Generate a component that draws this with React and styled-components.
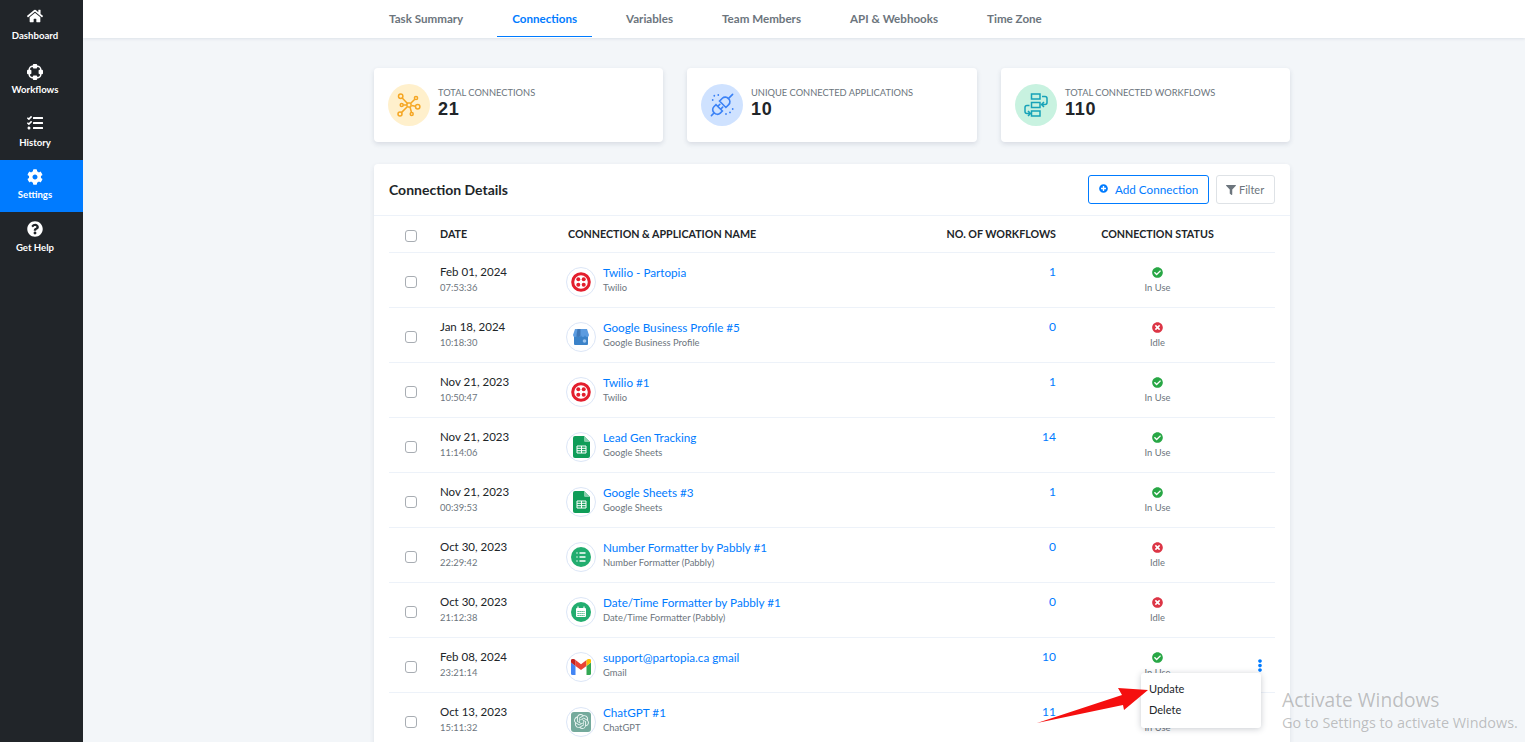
import React from "react";
import styled, { createGlobalStyle } from "styled-components";
import {
  FaHome,
  FaTasks,
  FaCog,
  FaQuestionCircle,
  FaCheckCircle,
  FaTimesCircle,
  FaPlusCircle,
  FaFilter,
  FaEllipsisV,
} from "react-icons/fa";
import { SiOpenai } from "react-icons/si";

const GlobalStyle = createGlobalStyle`
  html, body {
    margin: 0;
    height: 100%;
    overflow: hidden;
    background: #f3f6f9;
    font-family: "Lato", "Open Sans", sans-serif;
  }
  * { box-sizing: border-box; }
`;

const Page = styled.div`
  display: flex;
  height: 742px;
  overflow: hidden;
  position: relative;
`;

const Sidebar = styled.aside`
  width: 83px;
  flex: none;
  background: #212529;
  display: flex;
  flex-direction: column;
`;

const SideItem = styled.div`
  height: ${(p) => p.$h || 52}px;
  padding: ${(p) => p.$top || 9}px 13px 0 0;
  display: flex;
  flex-direction: column;
  align-items: center;
  gap: ${(p) => p.$gap || 4}px;
  color: #fff;
  font-size: 9.6px;
  line-height: 12px;
  font-weight: 700;
  background: ${(p) => (p.$active ? "#007bff" : "transparent")};
  svg {
    width: 16px;
    height: 16px;
  }
`;

const Main = styled.main`
  flex: 1;
  min-width: 0;
`;

const TopBar = styled.nav`
  height: 38px;
  background: #fff;
  box-shadow: 0 1px 3px rgba(30, 50, 80, 0.1);
  padding-left: 291px;
  display: flex;
  align-items: flex-start;
  gap: 19px;
`;

const Tab = styled.div`
  height: 37px;
  padding: 0 15px;
  display: flex;
  align-items: center;
  font-size: 11.6px;
  font-weight: 700;
  color: ${(p) => (p.$active ? "#007bff" : "#6c757d")};
  border-bottom: 1px solid ${(p) => (p.$active ? "#007bff" : "transparent")};
`;

const Content = styled.div`
  width: 916px;
  margin-left: 291px;
  padding-top: 30px;
`;

const Cards = styled.div`
  display: grid;
  grid-template-columns: 289px 290px 289px;
  gap: 24px;
`;

const Card = styled.div`
  height: 74px;
  background: #fff;
  border-radius: 4px;
  box-shadow: 0 2px 5px rgba(40, 60, 90, 0.14);
  padding: 0 14px;
  display: flex;
  align-items: center;
  gap: 8px;
`;

const CardIcon = styled.div`
  width: 42px;
  height: 42px;
  border-radius: 50%;
  background: ${(p) => p.$bg};
  display: flex;
  align-items: center;
  justify-content: center;
  flex: none;
`;

const CardText = styled.div`
  margin-top: -5px;
`;

const CardLabel = styled.div`
  font-size: 9.3px;
  line-height: 13px;
  color: #6c757d;
`;

const CardValue = styled.div`
  font-family: "Liberation Sans", sans-serif;
  font-weight: 700;
  font-size: 18px;
  line-height: 20px;
  color: #212529;
  letter-spacing: 0.7px;
`;

const Panel = styled.section`
  margin-top: 22px;
  background: #fff;
  border-radius: 4px 4px 0 0;
  box-shadow: 0 2px 5px rgba(40, 60, 90, 0.1);
`;

const PanelHead = styled.header`
  height: 52px;
  padding: 0 15px;
  border-bottom: 1px solid #edf2f9;
  display: flex;
  align-items: center;
  gap: 7px;
`;

const PanelTitle = styled.h2`
  margin: 0 auto 0 0;
  font-size: 14px;
  font-weight: 700;
  color: #212529;
`;

const Button = styled.button`
  width: ${(p) => (p.$primary ? 121 : 59)}px;
  height: 29px;
  padding: 0 0 ${(p) => (p.$primary ? 2 : 0)}px ${(p) => (p.$primary ? 10 : 9)}px;
  background: #fff;
  border-radius: 3px;
  border: 1px solid ${(p) => (p.$primary ? "#007bff" : "#dee2e6")};
  color: ${(p) => (p.$primary ? "#007bff" : "#6c757d")};
  font: inherit;
  font-size: ${(p) => (p.$primary ? 11.7 : 11)}px;
  display: flex;
  align-items: center;
  gap: ${(p) => (p.$primary ? 7 : 3)}px;
  svg {
    width: ${(p) => (p.$primary ? 9 : 10)}px;
    height: ${(p) => (p.$primary ? 9 : 10)}px;
  }
`;

const TableBody = styled.div`
  padding: 0 15px;
`;

const Row = styled.div`
  position: relative;
  display: grid;
  grid-template-columns: 51px 126px 334px 156px 203px 16px;
  align-items: center;
  height: ${(p) => (p.$head ? 37 : 55)}px;
  border-bottom: 1px solid #edf2f9;
`;

const HeadCell = styled.div`
  font-size: 10.7px;
  font-weight: 700;
  color: #212529;
  margin-top: -2px;
  text-align: ${(p) => p.$align || "left"};
  padding-left: ${(p) => p.$pad || 0}px;
`;

const Check = styled.span`
  display: block;
  width: 12px;
  height: 12px;
  margin: 3px 0 0 16px;
  border: 1px solid #a8adb3;
  border-radius: 3px;
  background: #fff;
`;

const DateCell = styled.div`
  margin-top: -2px;
`;

const DateText = styled.div`
  font-size: 11.5px;
  line-height: 15px;
  margin-bottom: 1px;
  color: #212529;
`;

const SubText = styled.div`
  font-size: 9.4px;
  line-height: 15px;
  color: #6c757d;
`;

const NameCell = styled.div`
  display: flex;
  align-items: center;
  gap: 7px;
`;

const LogoRing = styled.div`
  width: 30px;
  height: 30px;
  margin-top: 3px;
  border-radius: 50%;
  border: 1px solid #dce6f7;
  display: flex;
  align-items: center;
  justify-content: center;
  flex: none;
`;

const NameLink = styled.div`
  font-size: 11.7px;
  line-height: 15px;
  color: #007bff;
`;

const Count = styled.div`
  font-size: 12px;
  color: #007bff;
  text-align: right;
  margin-top: -17px;
`;

const Status = styled.div`
  display: flex;
  flex-direction: column;
  align-items: center;
  gap: 3px;
  font-size: 9.4px;
  line-height: 13px;
  color: #6c757d;
  margin-top: 1px;
  svg {
    width: 11px;
    height: 11px;
    color: ${(p) => (p.$ok ? "#28a745" : "#dc3545")};
  }
`;

const Kebab = styled.div`
  color: #007bff;
  line-height: 0;
  margin-left: -4px;
  svg {
    width: 10px;
    height: 13px;
  }
`;

const Menu = styled.div`
  position: absolute;
  top: 35px;
  right: 14px;
  width: 120px;
  height: 55px;
  padding: 5px 8px;
  background: #fff;
  border-radius: 3px;
  box-shadow: 0 1px 6px rgba(40, 50, 70, 0.25);
  z-index: 2;
`;

const MenuItem = styled.div`
  font-size: 11px;
  line-height: 21px;
  color: #212529;
`;

const Arrow = styled.svg`
  position: absolute;
  left: 1030px;
  top: 680px;
  z-index: 3;
`;

const Watermark = styled.div`
  position: absolute;
  left: 1282px;
  top: 687px;
  z-index: 4;
  font-family: "Open Sans", sans-serif;
  color: rgba(120, 120, 120, 0.45);
  pointer-events: none;
  white-space: nowrap;
`;

const WatermarkTitle = styled.div`
  font-size: 19.2px;
  line-height: 26px;
`;

const WatermarkText = styled.div`
  font-size: 14.4px;
  line-height: 20px;
`;

const WorkflowGlyph = () => (
  <svg viewBox="0 0 16 16">
    <rect x="2.200" y="2.200" width="11.600" height="11.600" rx="3.500" fill="none" stroke="#fff" strokeWidth="1.500" />
    {[[8, 2.200], [8, 13.800], [2.200, 8], [13.800, 8]].map(([x, y]) => (
      <rect key={x + "-" + y} x={x - 2.200} y={y - 2.200} width="4.400" height="4.400" rx="1" fill="#fff" />
    ))}
  </svg>
);

const NetworkGlyph = () => (
  <svg width="26" height="26" viewBox="0 0 26 26" fill="none" stroke="#f5a623" strokeWidth="1.500">
    <rect x="11" y="11" width="4" height="4" rx="1" />
    <circle cx="4.700" cy="4.300" r="2.200" />
    <circle cx="20" cy="6" r="1.600" />
    <circle cx="21.700" cy="14.700" r="2.200" />
    <circle cx="4" cy="22" r="2" />
    <circle cx="15.700" cy="22" r="1.500" />
    <circle cx="5.700" cy="13" r="1.500" />
    <path d="M11.500 11.500 6.200 5.900M15 11l3.800-3.800M15.500 13.500l4 .8M11 15l-5.600 5.600M14 15l1.500 5.500M11 13H7.200" />
  </svg>
);

const PlugGlyph = () => (
  <svg width="28" height="28" viewBox="0 0 28 28" fill="none" stroke="#3b82f6" strokeWidth="1.600" strokeLinecap="round">
    <g transform="rotate(-45 14 14)">
      <path d="M-1 14h4M3 14a4 4 0 0 1 4-4.500h3v9H7a4 4 0 0 1-4-4.500zM10 12h3M10 16h3" />
      <path d="M15 9.500h4a4 4 0 0 1 4 4.500 4 4 0 0 1-4 4.500h-4zM23 14h6" />
    </g>
    <path d="M6.300 4.700v.1M10.300 4v.1M4.700 9v.1M18 23v.1M22 21.300v.1M24.700 18v.1" strokeWidth="1.800" />
  </svg>
);

const FlowGlyph = () => (
  <svg width="28" height="28" viewBox="0 0 28 28" fill="none" stroke="#17a2b8" strokeWidth="1.500">
    <rect x="9.500" y="3" width="8.500" height="5" />
    <rect x="9.500" y="11.500" width="8.500" height="5" />
    <rect x="9.500" y="20" width="8.500" height="5" />
    <path d="M20 5.500h3a2 2 0 0 1 2 2v4a2 2 0 0 1-2 2h-3M22 11l-2.500 2.500L22 16" />
    <path d="M7.500 14.500H5a2 2 0 0 0-2 2v4a2 2 0 0 0 2 2h3M6 20l2.500 2.500L6 25" />
  </svg>
);

const TwilioLogo = () => (
  <svg width="20" height="20" viewBox="0 0 20 20">
    <circle cx="10" cy="10" r="8.300" fill="none" stroke="#e31e2d" strokeWidth="3" />
    {[[7.300, 7.300], [12.700, 7.300], [7.300, 12.700], [12.700, 12.700]].map(([x, y]) => (
      <circle key={x + "-" + y} cx={x} cy={y} r="2" fill="#e31e2d" />
    ))}
  </svg>
);

const BusinessLogo = () => (
  <svg width="18" height="18" viewBox="0 0 18 18">
    <rect x="2" y="6" width="14" height="11" rx="1" fill="#3b82c8" />
    <path d="M3 1h12l2 6a2 2 0 0 1-4 0 2 2 0 0 1-4 0 2 2 0 0 1-4 0 2 2 0 0 1-4 0z" fill="#5c9ce0" />
    <path d="M5.500 1h3v6a1.500 1.500 0 0 1-4 0z" fill="#3f78b8" />
    <circle cx="12.500" cy="13" r="1.800" fill="#9cc4ee" />
  </svg>
);

const SheetsLogo = () => (
  <svg width="17" height="22" viewBox="0 0 17 22">
    <path d="M2 0h9l6 6v14a2 2 0 0 1-2 2H2a2 2 0 0 1-2-2V2a2 2 0 0 1 2-2z" fill="#0f9d58" />
    <path d="M11 0l6 6h-4.500A1.500 1.500 0 0 1 11 4.500z" fill="#87ceac" />
    <path d="M4 10h9v7H4zM4 12.300h9M4 14.700h9M8.500 10v7" fill="none" stroke="#fff" strokeWidth="1" />
  </svg>
);

const ListLogo = () => (
  <svg width="20" height="20" viewBox="0 0 20 20">
    <circle cx="10" cy="10" r="10" fill="#21ad6f" />
    <path d="M8.500 6h6M8.500 10h6M8.500 14h6M5.500 6h1M5.500 10h1M5.500 14h1" stroke="#fff" strokeWidth="1.400" />
  </svg>
);

const CalendarLogo = () => (
  <svg width="20" height="20" viewBox="0 0 20 20">
    <circle cx="10" cy="10" r="10" fill="#21ad6f" />
    <rect x="5" y="6" width="10" height="9" rx="1" fill="#fff" />
    <path d="M7 4.500v2.500M13 4.500v2.500" stroke="#fff" strokeWidth="1.200" />
    <path d="M6.500 9.500h7M6.500 11.500h7M6.500 13.500h7" stroke="#21ad6f" strokeWidth="1" strokeDasharray="1.200 .8" />
  </svg>
);

const GmailLogo = () => (
  <svg width="20" height="16" viewBox="0 0 20 16">
    <path d="M0 3.500V14.500A1.500 1.500 0 0 0 1.500 16H4.500V7z" fill="#4285f4" />
    <path d="M15.500 7V16H18.500A1.500 1.500 0 0 0 20 14.500V3.500z" fill="#34a853" />
    <path d="M4.500 7 10 11l5.500-4V1L10 5.200 4.500 1z" fill="#ea4335" />
    <path d="M0 3.500 4.500 7V1L3 0A2 2 0 0 0 0 2z" fill="#c5221f" />
    <path d="M15.500 1V7L20 3.500V2a2 2 0 0 0-3-2z" fill="#fbbc04" />
  </svg>
);

const ChatTile = styled.div`
  width: 20px;
  height: 20px;
  border-radius: 3px;
  background: #74aa9c;
  color: #e8f3f0;
  display: flex;
  align-items: center;
  justify-content: center;
  svg {
    width: 15px;
    height: 15px;
  }
`;

const ChatLogo = () => (
  <ChatTile>
    <SiOpenai />
  </ChatTile>
);

const navItems = [
  { label: "Dashboard", icon: <FaHome />, h: 55, top: 8, gap: 6 },
  { label: "Workflows", icon: <WorkflowGlyph />, h: 53 },
  { label: "History", icon: <FaTasks />, top: 7, gap: 6 },
  { label: "Settings", icon: <FaCog />, active: true },
  { label: "Get Help", icon: <FaQuestionCircle />, gap: 5 },
];

const tabs = ["Task Summary", "Connections", "Variables", "Team Members", "API & Webhooks", "Time Zone"];

const rows = [
  ["Feb 01, 2024", "07:53:36", <TwilioLogo />, "Twilio - Partopia", "Twilio", 1, true],
  ["Jan 18, 2024", "10:18:30", <BusinessLogo />, "Google Business Profile #5", "Google Business Profile", 0, false],
  ["Nov 21, 2023", "10:50:47", <TwilioLogo />, "Twilio #1", "Twilio", 1, true],
  ["Nov 21, 2023", "11:14:06", <SheetsLogo />, "Lead Gen Tracking", "Google Sheets", 14, true],
  ["Nov 21, 2023", "00:39:53", <SheetsLogo />, "Google Sheets #3", "Google Sheets", 1, true],
  ["Oct 30, 2023", "22:29:42", <ListLogo />, "Number Formatter by Pabbly #1", "Number Formatter (Pabbly)", 0, false],
  ["Oct 30, 2023", "21:12:38", <CalendarLogo />, "Date/Time Formatter by Pabbly #1", "Date/Time Formatter (Pabbly)", 0, false],
  ["Feb 08, 2024", "23:21:14", <GmailLogo />, "support@partopia.ca gmail", "Gmail", 10, true, true],
  ["Oct 13, 2023", "15:11:32", <ChatLogo />, "ChatGPT #1", "ChatGPT", 11, true],
];

export default function App() {
  return (
    <>
      <GlobalStyle />
      <Page>
        <Sidebar>
          {navItems.map((item) => (
            <SideItem key={item.label} $active={item.active} $h={item.h} $top={item.top} $gap={item.gap}>
              {item.icon}
              {item.label}
            </SideItem>
          ))}
        </Sidebar>
        <Main>
          <TopBar>
            {tabs.map((t) => (
              <Tab key={t} $active={t === "Connections"}>
                {t}
              </Tab>
            ))}
          </TopBar>
          <Content>
            <Cards>
              <Card>
                <CardIcon $bg="#fff0cc"><NetworkGlyph /></CardIcon>
                <CardText>
                  <CardLabel>TOTAL CONNECTIONS</CardLabel>
                  <CardValue>21</CardValue>
                </CardText>
              </Card>
              <Card>
                <CardIcon $bg="#cfe2ff"><PlugGlyph /></CardIcon>
                <CardText>
                  <CardLabel>UNIQUE CONNECTED APPLICATIONS</CardLabel>
                  <CardValue>10</CardValue>
                </CardText>
              </Card>
              <Card>
                <CardIcon $bg="#c8f2e0"><FlowGlyph /></CardIcon>
                <CardText>
                  <CardLabel>TOTAL CONNECTED WORKFLOWS</CardLabel>
                  <CardValue>110</CardValue>
                </CardText>
              </Card>
            </Cards>
            <Panel>
              <PanelHead>
                <PanelTitle>Connection Details</PanelTitle>
                <Button $primary><FaPlusCircle />Add Connection</Button>
                <Button><FaFilter />Filter</Button>
              </PanelHead>
              <TableBody>
                <Row $head>
                  <Check />
                  <HeadCell>DATE</HeadCell>
                  <HeadCell $pad={2}>CONNECTION &amp; APPLICATION NAME</HeadCell>
                  <HeadCell $align="right">NO. OF WORKFLOWS</HeadCell>
                  <HeadCell $align="center">CONNECTION STATUS</HeadCell>
                  <span />
                </Row>
                {rows.map(([date, time, logo, name, app, count, ok, open]) => (
                  <Row key={name}>
                    <Check />
                    <DateCell>
                      <DateText>{date}</DateText>
                      <SubText>{time}</SubText>
                    </DateCell>
                    <NameCell>
                      <LogoRing>{logo}</LogoRing>
                      <div>
                        <NameLink>{name}</NameLink>
                        <SubText>{app}</SubText>
                      </div>
                    </NameCell>
                    <Count>{count}</Count>
                    <Status $ok={ok}>
                      {ok ? <FaCheckCircle /> : <FaTimesCircle />}
                      {ok ? "In Use" : "Idle"}
                    </Status>
                    {open ? <Kebab><FaEllipsisV /></Kebab> : <span />}
                    {open && (
                      <Menu>
                        <MenuItem>Update</MenuItem>
                        <MenuItem>Delete</MenuItem>
                      </Menu>
                    )}
                  </Row>
                ))}
              </TableBody>
            </Panel>
          </Content>
        </Main>
        <Arrow width="125" height="50" viewBox="0 0 125 50">
          <path d="M7 43 92 15 88 8 118 10 94 30 93 25Z" fill="#f50f0f" />
        </Arrow>
        <Watermark>
          <WatermarkTitle>Activate Windows</WatermarkTitle>
          <WatermarkText>Go to Settings to activate Windows.</WatermarkText>
        </Watermark>
      </Page>
    </>
  );
}
